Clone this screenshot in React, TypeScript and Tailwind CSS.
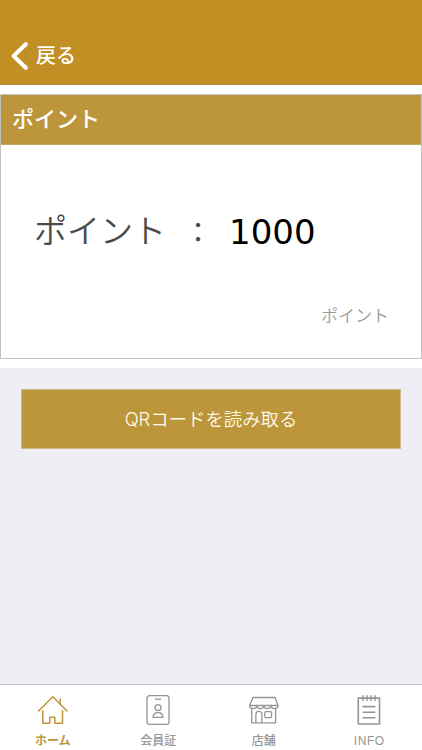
import type { ReactNode } from "react";

function HomeIcon() {
  return (
    <svg width="32" height="32" viewBox="0 0 32 32" fill="none" stroke="currentColor" strokeWidth="1.5" strokeLinejoin="round" strokeLinecap="round">
      <path d="M1.6 17 15.8 2.8 30 17" />
      <path d="M5.8 16.8V29.3h7v-6.1h5v6.1h7.7V16.8" />
      <path d="M23.2 10V5" />
    </svg>
  );
}

function MemberCardIcon() {
  return (
    <svg width="32" height="32" viewBox="0 0 32 32" fill="none" stroke="currentColor" strokeWidth="1.3" strokeLinejoin="round">
      <rect x="5" y="1.7" width="22" height="28.6" rx="2.6" />
      <path d="M12.9 5.2h6.2" />
      <circle cx="16" cy="13.6" r="3" />
      <path d="M11.1 23.4c0-3.2 2-4.8 4.9-4.8s4.9 1.6 4.9 4.8Z" />
    </svg>
  );
}

function ShopIcon() {
  return (
    <svg width="32" height="32" viewBox="0 0 32 32" fill="none" stroke="currentColor" strokeWidth="1.3" strokeLinejoin="round">
      <path d="M5 3.5h22l3 8H1.6Z" />
      <path d="M1.6 11.5a3.55 3.1 0 0 0 7.1 0 3.55 3.1 0 0 0 7.1 0 3.55 3.1 0 0 0 7.1 0 3.55 3.1 0 0 0 7.1 0" />
      <path d="M3.7 14v14.8h23.9V14" />
      <path d="M7.9 28.8v-8.4a3 3 0 0 1 6 0v8.4" />
      <rect x="16.8" y="17.6" width="6.8" height="6" rx="1" />
    </svg>
  );
}

function InfoIcon() {
  return (
    <svg width="32" height="32" viewBox="0 0 32 32" fill="none" stroke="currentColor" strokeWidth="1.6">
      <path d="M5.3 4.1h21.2v25.9H5.3Z" />
      <path d="M10 1.3v5.8M14 1.3v5.8M18 1.3v5.8M22 1.3v5.8" strokeWidth="1.4" />
      <path d="M9.5 12.6h12.8M9.5 18.2h12.8M9.5 23.7h12.8" />
    </svg>
  );
}

const tabs: { label: string; icon: ReactNode; className: string }[] = [
  { label: "ホーム", icon: <HomeIcon />, className: "text-[#bd963c] font-bold" },
  { label: "会員証", icon: <MemberCardIcon />, className: "text-[#959595] font-medium" },
  { label: "店舗", icon: <ShopIcon />, className: "text-[#959595] font-medium" },
  { label: "INFO", icon: <InfoIcon />, className: "text-[#959595] tracking-[0.6px]" },
];

export default function App() {
  return (
    <div className="w-full h-[750px] flex flex-col overflow-hidden bg-[#efeef4] font-['Liberation_Sans','Noto_Sans_CJK_JP',sans-serif]">
      <header className="h-[85px] shrink-0 bg-[#c28f24] border-b border-[#ad8a48] pt-[27px] pl-[11px] flex items-center">
        <button className="flex items-center text-white">
          <svg width="18" height="28" viewBox="0 0 18 28" fill="none" stroke="currentColor" strokeWidth="4" strokeLinecap="round" strokeLinejoin="round">
            <path d="M14.8 2.2 2.6 14l12.2 11.8" />
          </svg>
          <span className="ml-[7px] mt-px text-[20px] leading-7 font-medium">戻る</span>
        </button>
      </header>

      <section className="bg-white pt-[9px] pb-[9px]">
        <div className="h-[265px] border border-[#c3c3c3] bg-white flex flex-col">
          <h1 className="h-[50px] shrink-0 bg-[#bd953b] border-b border-[#c5a764] pl-[11px] text-[22px] leading-[49px] font-medium text-white">
            ポイント
          </h1>
          <div className="flex items-center h-[174px] pl-[33px] text-[#4b4b4b]">
            <span className="text-[33px] leading-[48px] font-[350]">ポイント</span>
            <span className="w-[28px] ml-[18px] pt-[3px] text-[28px] leading-[48px] font-normal">：</span>
            <span className="ml-[17px] text-[34px] leading-[48px] text-black font-['DejaVu_Sans',sans-serif]">1000</span>
          </div>
          <p className="pr-8 -mt-[14px] text-right text-[17px] leading-6 font-[350] text-[#9b9b9b]">ポイント</p>
        </div>
      </section>

      <main className="flex-1 px-[21px] pt-[21px]">
        <button className="w-full h-[60px] bg-[#bd953b] border border-[#cdb88a] pt-px text-[18.4px] font-[350] text-[#fffbea] font-['Inter','Noto_Sans_CJK_JP',sans-serif]">
          QRコードを読み取る
        </button>
      </main>

      <nav className="h-[66px] shrink-0 bg-white border-t border-[#c3c2c8] grid grid-cols-4">
        {tabs.map((tab) => (
          <a key={tab.label} className={`flex flex-col items-center pt-[9px] ${tab.className}`}>
            {tab.icon}
            <span className="mt-[6px] text-[12px] leading-[18px]">{tab.label}</span>
          </a>
        ))}
      </nav>
    </div>
  );
}
